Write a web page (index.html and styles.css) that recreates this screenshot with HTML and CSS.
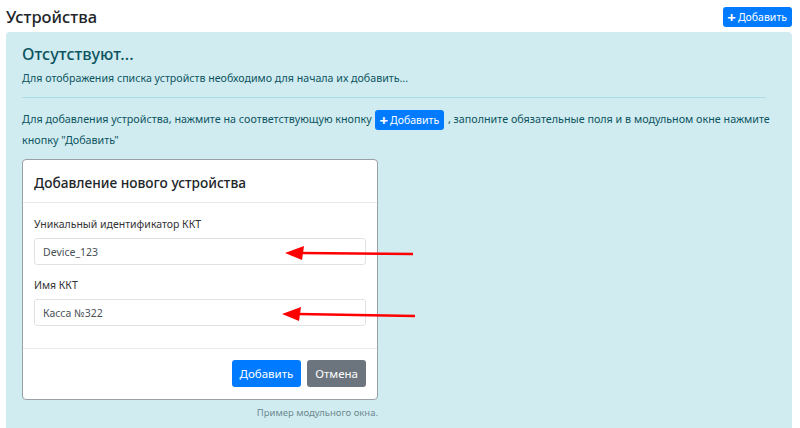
FILE: index.html
```html
<!DOCTYPE html>
<html>

<head>
  <title>Устройства</title>
  <link rel="stylesheet" href="styles.css">
</head>

<body>

  <div class="entete">
    <h1>Устройства</h1>
    <button class="btn btn-bleu btn-petit"><span class="plus">+</span>Добавить</button>
  </div>

  <div class="alerte">
    <h2>Отсутствуют...</h2>
    <p class="sous-titre">Для отображения списка устройств необходимо для начала их добавить...</p>
    <hr>
    <p class="consigne">Для добавления устройства, нажмите на соответствующую кнопку
      <button class="btn btn-bleu btn-petit btn-ligne"><span class="plus">+</span>Добавить</button>
      , заполните обязательные поля и в модульном окне нажмите кнопку "Добавить"</p>

    <div class="exemple">
      <div class="modal">
        <div class="modal-tete">Добавление нового устройства</div>
        <div class="modal-corps">
          <label>Уникальный идентификатор ККТ</label>
          <div class="champ">Device_123</div>
          <label>Имя ККТ</label>
          <div class="champ">Касса №322</div>
        </div>
        <div class="modal-pied">
          <button class="btn btn-bleu">Добавить</button>
          <button class="btn btn-gris">Отмена</button>
        </div>
      </div>

      <!-- flèches rouges par-dessus le modal -->
      <svg class="fleches" width="150" height="90" viewBox="0 0 150 90">
        <line x1="18" y1="12" x2="131" y2="13" stroke="#f00" stroke-width="2.5"/>
        <polygon points="3,12 22,5 20,19" fill="#f00"/>
        <line x1="16" y1="73" x2="133" y2="75" stroke="#f00" stroke-width="2.5"/>
        <polygon points="0,73 19,66 17,80" fill="#f00"/>
      </svg>

      <div class="legende">Пример модульного окна.</div>
    </div>
  </div>

</body>

</html>
```

FILE: styles.css
```css
body {
  margin: 0;
  font-family: "Noto Sans", "Open Sans", sans-serif;
  background: #fff;
  color: #212529;
}

.entete {
  display: flex;
  justify-content: space-between;
  align-items: center;
  padding: 5px 8px 0 6px;
}

.entete h1 {
  margin: 0;
  font-size: 16.5px;
  font-weight: 500;
  line-height: 24px;
}

.btn {
  font-family: inherit;
  border: none;
  border-radius: 3px;
  color: #fff;
  cursor: pointer;
}

.btn-bleu {
  background: #007bff;
}

.btn-gris {
  background: #6c757d;
}

.btn-petit {
  font-size: 10.5px;
  height: 20px;
  padding: 0 5px 0 4px;
  display: inline-flex;
  align-items: center;
}

.plus {
  font-weight: 700;
  font-size: 15px;
  margin-right: 2px;
  line-height: 1;
}

.alerte {
  margin: 3px 8px 0 6px;
  padding: 11px 16px 12px 16px;
  background: #d1ecf1;
  color: #0c5460;
  border-radius: 4px 4px 0 0;
  min-height: 390px;
}

.alerte h2 {
  margin: 0;
  font-size: 16.3px;
  font-weight: 500;
  line-height: 22px;
}

.sous-titre {
  margin: 6px 0 0;
  font-size: 10.65px;
  line-height: 14px;
}

hr {
  border: 0;
  border-top: 1px solid #abdde5;
  margin: 12px 10px 11px 0;
}

.consigne {
  margin: 0;
  font-size: 10.75px;
  line-height: 20px;
}

.btn-ligne {
  margin: 0 1px;
  vertical-align: middle;
}

.exemple {
  position: relative;
  margin-top: 9px;
  width: 356px;
}

.modal {
  background: #fff;
  border: 1px solid #9aa0a6;
  border-radius: 4px;
  color: #212529;
}

.modal-tete {
  font-size: 13.7px;
  font-weight: 500;
  padding: 13px 11px 10px;
  border-bottom: 1px solid #e9ecef;
}

.modal-corps {
  padding: 14px 11px 22px;
  display: flex;
  flex-direction: column;
}

.modal-corps label {
  font-size: 10.5px;
  line-height: 14px;
  margin-bottom: 7px;
  color: #333;
}

.champ {
  height: 27px;
  box-sizing: border-box;
  border: 1px solid #dfe3e6;
  border-radius: 3px;
  font-size: 10.5px;
  color: #495057;
  padding-left: 8px;
  display: flex;
  align-items: center;
  margin-bottom: 13px;
}

.champ:last-child {
  margin-bottom: 0;
}

.modal-pied {
  border-top: 1px solid #e9ecef;
  padding: 11px 11px 12px;
  display: flex;
  justify-content: flex-end;
  gap: 6px;
}

.modal-pied .btn {
  font-size: 11.5px;
  height: 27px;
  padding: 0 8px;
}

.fleches {
  position: absolute;
  left: 260px;
  top: 82px;
}

.legende {
  text-align: right;
  font-size: 9.5px;
  color: #6c8a90;
  margin-top: 6px;
}
```
